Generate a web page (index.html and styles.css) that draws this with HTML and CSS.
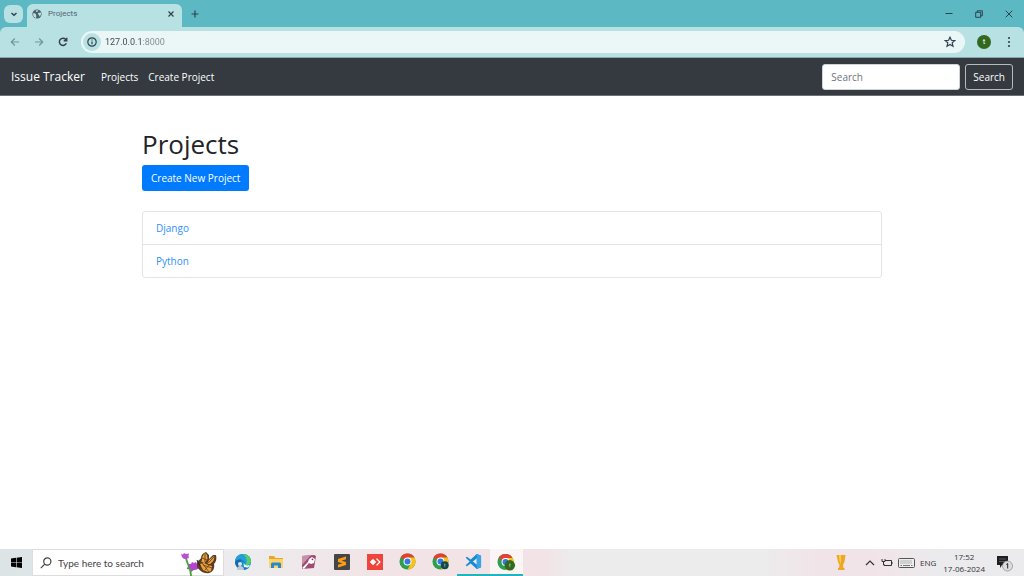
FILE: index.html
```html
<!DOCTYPE html>
<html lang="en">
<head>
    <meta charset="UTF-8">
    <meta name="viewport" content="width=device-width, initial-scale=1.0">
    <title>Projects</title>
    <link rel="stylesheet" href="styles.css">
</head>
<body>
    <header class="browser">
        <div class="tab-strip">
            <button class="tab-search" aria-label="Search tabs">
                <svg width="8" height="8" viewBox="0 0 8 8"><path d="M1.500 3L4 5.200 6.500 3" class="line bold"/></svg>
            </button>
            <div class="tab">
                <svg width="10" height="10" viewBox="0 0 10 10">
                    <circle cx="5" cy="5" r="4.600" fill="#4d5f66"/>
                    <path d="M1 4.400c1.600-.2 2.600.2 3 1.100.5.9-.2 1.400.4 2.200L4 9C2.300 8.600 1 7 1 4.400zM4.300 1.200h1.800c.2 1-.6 1.500-1.500 1.700L3.700 2zM6 4l2.900-.4c.4 1.600-.1 3.100-1.200 4.200C7.600 6.300 5.800 6 6 4z" fill="#b8e1e4"/>
                </svg>
                <span class="tab-title">Projects</span>
                <button class="icon-button" aria-label="Close tab">
                    <svg width="8" height="8" viewBox="0 0 8 8"><path d="M1.500 1.500l5 5M6.500 1.500l-5 5" class="line"/></svg>
                </button>
            </div>
            <button class="icon-button new-tab" aria-label="New tab">
                <svg width="8" height="8" viewBox="0 0 8 8"><path d="M4 .5v7M.5 4h7" class="line"/></svg>
            </button>
            <div class="window-buttons">
                <button class="icon-button" aria-label="Minimize">
                    <svg width="8" height="8" viewBox="0 0 8 8"><path d="M.5 3.500h7" class="line thin"/></svg>
                </button>
                <button class="icon-button" aria-label="Restore">
                    <svg width="8" height="8" viewBox="0 0 8 8"><path d="M.7 2.300h5v5h-5zM2.300 2.300V.8h5v5H5.700" class="line thin"/></svg>
                </button>
                <button class="icon-button" aria-label="Close">
                    <svg width="8" height="8" viewBox="0 0 8 8"><path d="M.7.7l6.600 6.600M7.300.7L.7 7.300" class="line thin"/></svg>
                </button>
            </div>
        </div>
        <div class="toolbar">
            <button class="icon-button muted" aria-label="Back">
                <svg width="10" height="10" viewBox="0 0 10 10"><path d="M9 5H1.500M4.800 1.500L1.300 5l3.500 3.500" class="line"/></svg>
            </button>
            <button class="icon-button muted" aria-label="Forward">
                <svg width="10" height="10" viewBox="0 0 10 10"><path d="M1 5h7.500M5.200 1.500L8.700 5 5.200 8.500" class="line"/></svg>
            </button>
            <button class="icon-button" aria-label="Reload">
                <svg width="10" height="10" viewBox="0 0 10 10"><path d="M8.300 6.300A3.600 3.600 0 1 1 7.700 2.500L8.600 3.500M8.700.8v3H5.700" class="line bold"/></svg>
            </button>
            <div class="address-bar">
                <button class="site-info" aria-label="View site information">
                    <svg width="10" height="10" viewBox="0 0 10 10"><circle cx="5" cy="5" r="4.200" class="line"/><path d="M5 4.500v2.700M5 2.500v1.100" class="line"/></svg>
                </button>
                <input type="text" class="address" value="127.0.0.1:8000" aria-label="Address">
                <button class="icon-button" aria-label="Bookmark this tab">
                    <svg width="12" height="12" viewBox="0 0 12 12"><path d="M6 1.200l1.400 3.100 3.400.3-2.600 2.200.8 3.400-3-1.800-3 1.800.8-3.400L1.200 4.600l3.400-.3z" class="line"/></svg>
                </button>
            </div>
            <button class="profile" aria-label="Profile">t</button>
            <button class="icon-button" aria-label="Menu">
                <svg width="10" height="12" viewBox="0 0 10 12" fill="#30424d"><circle cx="5" cy="2" r="1.100"/><circle cx="5" cy="6" r="1.100"/><circle cx="5" cy="10" r="1.100"/></svg>
            </button>
        </div>
    </header>

    <nav class="navbar">
        <a class="navbar-brand" href="#">Issue Tracker</a>
        <a class="nav-link" href="#">Projects</a>
        <a class="nav-link" href="#">Create Project</a>
        <form class="search-form">
            <input type="search" class="form-control" placeholder="Search" aria-label="Search">
            <button type="submit" class="btn btn-outline-light">Search</button>
        </form>
    </nav>

    <main class="container">
        <h1>Projects</h1>
        <a class="btn btn-primary" href="#">Create New Project</a>
        <ul class="list-group">
            <li><a href="#">Django</a></li>
            <li><a href="#">Python</a></li>
        </ul>
    </main>

    <footer class="taskbar">
        <button class="start" aria-label="Start">
            <svg width="11" height="11" viewBox="0 0 11 11"><path d="M0 1.500L5 .8v4.400H0zM5.600.7L11 0v5.200H5.600zM0 5.800h5v4.400l-5-.7zM5.600 5.800H11V11l-5.400-.7z"/></svg>
        </button>
        <div class="taskbar-search">
            <svg width="12" height="12" viewBox="0 0 12 12"><circle cx="7.300" cy="4.500" r="3.600" class="line"/><path d="M4.700 7.200L.8 11.200" class="line"/></svg>
            <input type="text" placeholder="Type here to search" aria-label="Type here to search">
            <svg width="38" height="26" viewBox="0 0 38 26">
                <path d="M6 8c1 6 5 10 5 18M11 21l5-4M10 19l-3-1" fill="none" stroke="#4f9a45" stroke-width="1.800"/>
                <path d="M1 4l2 .5L4 3l2 1 3-.5L8.500 6l.5 2-3 .7L4 9 2 7z" fill="#b850d5"/>
                <path d="M9 14l2 0 1-2 2 1 2-1 1 2 2 1-1 4-3 1h-4l-2-3z" fill="#b344cf"/>
                <path d="M17 13c0-2 3-3 4-5 0-3 2-5 5-6l3 3 0 4 4-4 3 0c1 4 0 7-2 9 1 4-1 8-5 9-5 1-9-2-12-6z" fill="#5a3d22"/>
                <path d="M22 9c0-2 1-4 3-6l2 2 .5 4-3 4-3-1zM29 10l5-4c1 3-1 6-4 8l-3 0zM20 14l4-1 4 2 4 1-1 5-3 1-5-2z" fill="#eda03a"/>
                <path d="M25 4v8M22 8l5 2M22 13l7 9M27 14l7-7M23 15l9 3M25 20l4-5" fill="none" stroke="#5a3d22" stroke-width=".8"/>
                <path d="M17 10l3 6" stroke="#29221f"/>
            </svg>
        </div>
        <div class="apps">
            <button class="app" aria-label="Microsoft Edge">
                <svg width="18" height="18" viewBox="0 0 18 18">
                    <circle cx="9" cy="9" r="8" fill="#168bd0"/>
                    <path d="M1.300 7C2 3 5.500 1 9 1c4.700 0 8 3.500 8 7 0 3-2 4.500-4.500 4.500-2 0-3-.8-2-2 .7-1.200.2-3-2-3.500C5.500 6.300 3 7 1.300 9z" fill="#239fd5"/>
                    <path d="M9 1c5 0 8 3.500 8 7 0 3-3 5-6 4 3-3 2-7-2-11z" fill="#55cc6d"/>
                    <path d="M1 9c2-3 5-3.500 7-2-3 2-2 6 1 8 2 1 4 .5 6-.5C12 18 2 18 1 9z" fill="#1769aa"/>
                    <path d="M9.500 10c1 2.500 4 3 6.500 2l-2 2.500-4-.5z" fill="#fff"/>
                    <circle cx="6" cy="11" r="2" fill="#dbe3e7"/>
                    <path d="M3 17c0-3 1-4 3-4s4 1 4 4z" fill="#bdcbd2"/>
                </svg>
            </button>
            <button class="app" aria-label="File Explorer">
                <svg width="16" height="14" viewBox="0 0 16 14"><path d="M1 1h5l1.500 2H15v10H1z" fill="#e9a52b"/><path d="M1 4h14v9H1z" fill="#ffd466"/><path d="M3 13V8.500L4 7.500h8l1 1V13h-3v-2.500H6V13z" fill="#2589d0"/></svg>
            </button>
            <button class="app" aria-label="Access">
                <svg width="16" height="16" viewBox="0 0 16 16"><path d="M1 2l12-1 2 1-2 12-12 1z" fill="#a04a74"/><path d="M1 2l9-1L1 11z" fill="#c790ab"/><path d="M8 5l3-2 3 2-1 4-3 1-2-1-5 6-2-1 6-6z" fill="#fff"/><circle cx="11.500" cy="5.300" r=".9" fill="#8d3158"/></svg>
            </button>
            <button class="app" aria-label="Sublime Text">
                <svg width="16" height="16" viewBox="0 0 16 16"><rect width="16" height="16" rx="1" fill="#444746"/><path d="M4 5l8-2.500v2.700L7.500 6.700 12 8v3l-8 2.500v-2.700l4.500-1.500L4 8z" fill="#ff9c16"/></svg>
            </button>
            <button class="app" aria-label="AnyDesk">
                <svg width="16" height="16" viewBox="0 0 16 16"><rect width="16" height="16" fill="#ef443b"/><path d="M6 4.800L9.200 8 6 11.200 2.800 8zM9 5l1-.8L13.800 8 10 11.800 9 11l3-3z" fill="#fff"/></svg>
            </button>
            <button class="app" aria-label="Google Chrome">
                <svg width="17" height="17" viewBox="0 0 18 18"><circle cx="9" cy="9" r="8.500" fill="#2c9f50"/><path d="M9 9L1.600 4.800A8.500 8.500 0 0 1 16.400 4.800H9z" fill="#e34133"/><path d="M9 4.800h7.400A8.500 8.500 0 0 1 9 17.500l3.700-6.400z" fill="#fbc116"/><circle cx="9" cy="9" r="4.200" fill="#fff"/><circle cx="9" cy="9" r="3.200" fill="#3479df"/></svg>
            </button>
            <button class="app" aria-label="Google Chrome, second profile">
                <svg width="17" height="17" viewBox="0 0 18 18"><circle cx="9" cy="9" r="8.500" fill="#2c9f50"/><path d="M9 9L1.600 4.800A8.500 8.500 0 0 1 16.400 4.800H9z" fill="#e34133"/><path d="M9 4.800h7.400A8.500 8.500 0 0 1 9 17.500l3.700-6.400z" fill="#fbc116"/><circle cx="9" cy="9" r="4.200" fill="#fff"/><circle cx="9" cy="9" r="3.200" fill="#3479df"/><circle cx="13.500" cy="13" r="4.200" fill="#10484b"/><path d="M13.500 11v4M12.500 12.500h2" stroke="#8eacaa" stroke-width=".7"/></svg>
            </button>
            <button class="app running" aria-label="Visual Studio Code">
                <svg width="17" height="17" viewBox="0 0 18 18"><path d="M12.500 1L17 3v12l-4.500 2L6 11l-4 3-1.300-.9L5 9 .7 4.900 2 4l4 3zM12.500 5.500L8.300 9l4.200 3.500z" fill="#168bd2"/><path d="M12.500 1L17 3v12l-4.500 2z" fill="#34a5eb"/></svg>
            </button>
            <button class="app running active" aria-label="Google Chrome, Projects">
                <svg width="19" height="18" viewBox="0 0 20 18"><circle cx="9" cy="9" r="8.500" fill="#2c9f50"/><path d="M9 9L1.600 4.800A8.500 8.500 0 0 1 16.400 4.800H9z" fill="#e34133"/><path d="M9 4.800h7.400A8.500 8.500 0 0 1 9 17.500l3.700-6.400z" fill="#fbc116"/><circle cx="9" cy="9" r="4.200" fill="#fff"/><circle cx="9" cy="9" r="3.200" fill="#3479df"/><circle cx="13.500" cy="12.500" r="5.500" fill="#32691e"/><path d="M13.500 10.500v4M12.500 12h2" stroke="#b4c8ac" stroke-width=".7"/></svg>
            </button>
        </div>
        <div class="tray">
            <button class="icon-button trophy" aria-label="News">
                <svg width="10" height="17" viewBox="0 0 10 17"><path d="M.5 1h9L8.500 8 7 11l.5 3h1v2H2v-2h1l.5-3L2 8z" fill="#efa622"/><path d="M3 1h2v9L3.500 7z" fill="#ffce57"/></svg>
            </button>
            <button class="icon-button" aria-label="Show hidden icons">
                <svg width="10" height="10" viewBox="0 0 10 10"><path d="M1 7l4-4 4 4" class="line"/></svg>
            </button>
            <svg width="12" height="10" viewBox="0 0 12 10"><path d="M4 2.500h6.500v5H3V6M11 4v2M1 1v2.500h3V1M2.500 3.500V7" class="line thin"/></svg>
            <svg width="17" height="10" viewBox="0 0 17 10"><rect x=".5" y=".5" width="16" height="9" rx="1" fill="#eee" stroke="#555"/><path d="M2.500 3h12M2.500 5h12" stroke="#777" stroke-dasharray="1 1"/><path d="M2.500 7.500h1.500M5 7.500h7M13 7.500h1.500" stroke="#777"/></svg>
            <button class="language">ENG</button>
            <div class="clock"><time>17:52</time><time>17-06-2024</time></div>
            <button class="icon-button" aria-label="Notifications, 1 new">
                <svg width="17" height="18" viewBox="0 0 17 18"><path d="M1 2h11v9H6l-2 3v-3H1z" fill="#1c1e20"/><path d="M3 5h7M3 7.500h7" stroke="#777" stroke-width=".7"/><circle cx="11.500" cy="12" r="5" fill="#ddd" stroke="#888" stroke-width=".7"/><path d="M10.300 10.500l1.400-1v5" fill="none" stroke="#222"/></svg>
            </button>
        </div>
    </footer>
</body>
</html>
```

FILE: styles.css
```css
* {
    box-sizing: border-box;
}
body {
    display: flex;
    flex-direction: column;
    min-height: 100vh;
    margin: 0;
    font-family: "Open Sans", "Noto Sans", sans-serif;
    font-size: 10px;
    line-height: 16px;
    color: #212529;
    background: #fff;
}
button,
input {
    font: inherit;
    color: inherit;
    margin: 0;
    padding: 0;
    border: none;
    background: none;
}
button {
    display: flex;
    align-items: center;
    justify-content: center;
    cursor: pointer;
}
input {
    min-width: 0;
}
a {
    text-decoration: none;
}
svg {
    flex: none;
}
.line {
    fill: none;
    stroke: currentColor;
    stroke-width: 1.2;
}
.line.thin {
    stroke-width: 1;
}
.line.bold {
    stroke-width: 1.5;
}

/* browser window */
.browser {
    color: #30424d;
    background: #5cb8c2;
    font-family: Roboto, sans-serif;
    font-size: 9px;
}
.tab-strip {
    display: flex;
    align-items: center;
    height: 27px;
    padding: 0 4px;
}
.tab-search {
    width: 19px;
    height: 18px;
    border-radius: 6px;
    background: #b8e1e4;
}
.tab {
    display: flex;
    align-items: center;
    align-self: flex-end;
    width: 155px;
    height: 23px;
    margin-left: 4px;
    padding: 0 5px 4px;
    gap: 6px;
    border-radius: 6px 6px 0 0;
    background: #b8e1e4;
}
.tab-title {
    flex: 1;
    font-size: 8px;
    color: #52656d;
}
.icon-button {
    width: 12px;
    height: 18px;
}
.new-tab {
    margin-left: 7px;
}
.window-buttons {
    display: flex;
    gap: 18px;
    margin-left: auto;
    padding-right: 5px;
}
.toolbar {
    display: flex;
    align-items: center;
    gap: 12px;
    height: 31px;
    padding: 0 9px;
    border-bottom: 1px solid #8aa9ae;
    border-radius: 6px 6px 0 0;
    background: #b8e1e4;
}
.muted {
    color: #7294a0;
}
.address-bar {
    display: flex;
    align-items: center;
    flex: 1;
    height: 22px;
    padding: 0 9px 0 2px;
    border-radius: 11px;
    background: #ebf7f7;
}
.site-info {
    width: 18px;
    height: 18px;
    border-radius: 50%;
    background: #b8e1e4;
}
.address {
    flex: 1;
    margin-left: 4px;
    /* host is darker than the port */
    background: linear-gradient(90deg, #37474d 37px, #7d8b90 37px);
    -webkit-background-clip: text;
    background-clip: text;
    color: transparent;
}
.profile {
    width: 14px;
    height: 14px;
    border-radius: 50%;
    font-size: 8px;
    line-height: 8px;
    color: #fff;
    background: #32691e;
}

/* page */
.navbar {
    display: flex;
    align-items: center;
    padding: 6px 11px 5px;
    border-bottom: 1px solid #6c7075;
    background: #343a40;
}
.navbar-brand {
    margin-right: 11px;
    font-size: 12px;
    color: #fff;
}
.nav-link {
    padding: 0 5px;
    color: #fff;
}
.search-form {
    display: flex;
    gap: 5px;
    margin-left: auto;
}
.form-control {
    width: 138px;
    padding: 4px 8px;
    border: 1px solid #ced4da;
    border-radius: 3px;
    background: #fff;
    color: #495057;
}
.form-control::placeholder {
    color: #6c757d;
}
.btn {
    display: inline-block;
    padding: 4px 8px;
    border: 1px solid transparent;
    border-radius: 3px;
    color: #fff;
}
.btn-outline-light {
    padding: 4px 7px;
    border-color: #b8babc;
}
.btn-primary {
    background: #007bff;
}
.container {
    flex: 1;
    width: 100%;
    max-width: 740px;
    margin: 0 auto;
    padding-top: 32px;
}
h1 {
    margin: 0 0 5px;
    font-size: 26px;
    line-height: 32px;
    font-weight: 500;
}
.list-group {
    margin: 20px 0 0;
    padding: 0;
    list-style: none;
    border: 1px solid #e4e4e5;
    border-radius: 3px;
}
.list-group li {
    padding: 8px 13px;
}
.list-group li + li {
    border-top: 1px solid #e4e4e5;
}
.list-group a {
    color: #2f8fff;
}

/* desktop taskbar */
.taskbar {
    display: flex;
    height: 27px;
    background: linear-gradient(90deg, #dce4e5 0, #ececee 23%, #f2e3e6 38%, #f2e3e6 53%, #ececec 56%, #ececec 74%, #f1e4e8 80%, #f1e4e8 85%, #ebebed 92%);
}
.start {
    width: 32px;
}
.taskbar-search {
    display: flex;
    align-items: center;
    width: 192px;
    padding: 0 5px 0 7px;
    border: 1px solid #ddd;
    background: #fff;
    color: #444;
}
.taskbar-search input {
    flex: 1;
    margin-left: 6px;
    font-family: Lato, sans-serif;
}
.taskbar-search input::placeholder {
    color: #444;
}
.apps {
    display: flex;
    margin-left: 2px;
}
.app {
    width: 33px;
    border-bottom: 2px solid transparent;
}
.app.running {
    border-bottom-color: #20b4bd;
}
.app.active {
    background: #fbf5f6;
}
.tray {
    display: flex;
    align-items: center;
    gap: 5px;
    margin-left: auto;
    padding-right: 14px;
    color: #333;
}
.trophy {
    margin-right: 12px;
}
.language {
    font-size: 8px;
}
.clock {
    display: flex;
    flex-direction: column;
    align-items: center;
    margin: 0 8px 0 2px;
    font-size: 8px;
    line-height: 12px;
}
```
